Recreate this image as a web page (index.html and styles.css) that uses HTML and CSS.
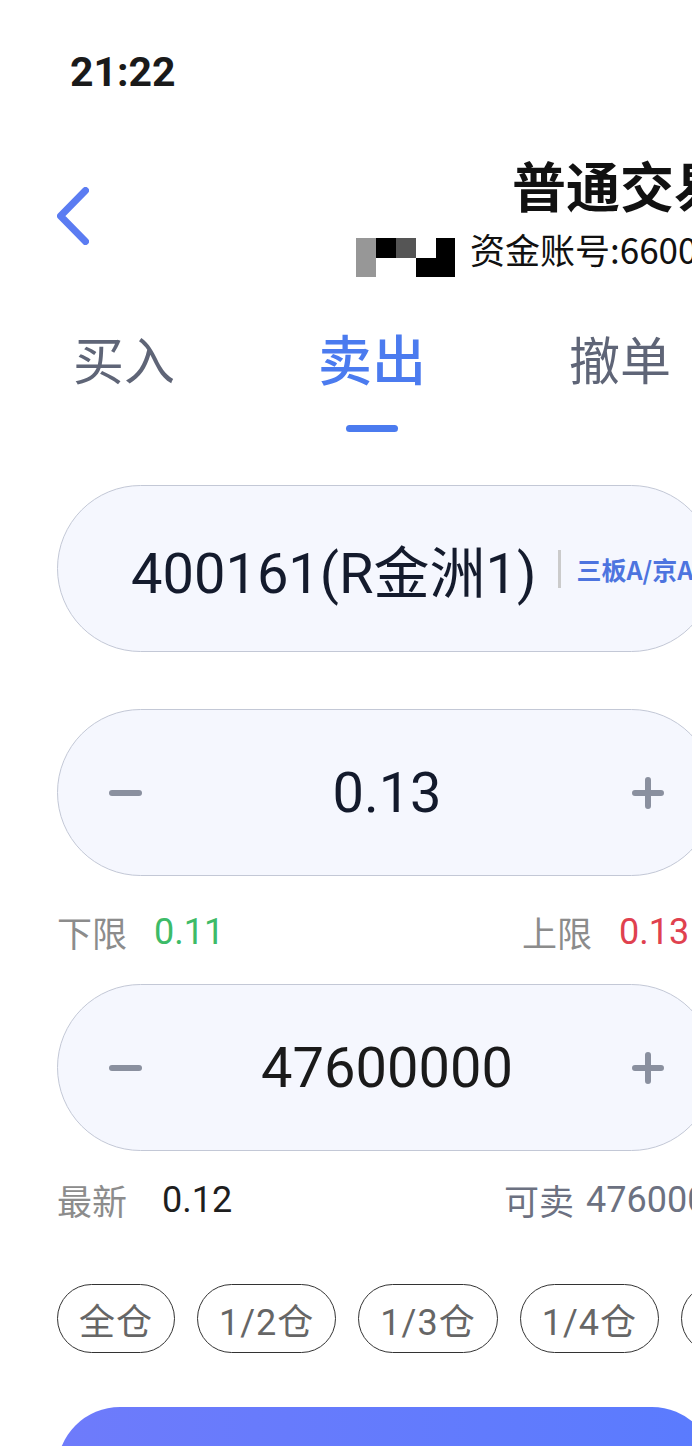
FILE: index.html
```html
<!DOCTYPE html>
<html lang="zh-CN">
  <head>
    <meta charset="UTF-8" />
    <meta name="viewport" content="width=device-width, initial-scale=1.0" />
    <title>普通交易 || 卖出</title>
    <link rel="stylesheet" href="styles.css">
  </head>
  <body>
    <div class="page">
      <div class="status">21:22</div>

      <header class="nav">
        <a class="back" href="#" aria-label="返回">
          <svg width="32" height="58" viewBox="0 0 32 58">
            <polyline points="28.5,3.5 3.5,29 28.5,54.5" fill="none" stroke="#5b7cf2" stroke-width="7" stroke-linecap="round" stroke-linejoin="round" />
          </svg>
        </a>
        <div class="title-block">
          <h1 class="title">普通交易</h1>
          <div class="account">
            <span class="mask">
              <i class="m-grey"></i><i class="m-black"></i><i class="m-dark"></i><i></i><i class="m-black"></i>
              <i class="m-grey"></i><i></i><i></i><i class="m-black"></i><i class="m-black"></i>
            </span>
            <span class="account-no">资金账号:66001829374</span>
          </div>
        </div>
      </header>

      <nav class="tabs">
        <div class="tab">买入</div>
        <div class="tab active">卖出</div>
        <div class="tab">撤单</div>
      </nav>

      <section class="form">
        <div class="field stock">
          <span class="stock-name">400161(R金洲1)</span>
          <span class="sep"></span>
          <span class="market">三板A/京A</span>
        </div>

        <div class="field stepper">
          <svg class="step" width="33" height="32" viewBox="0 0 33 32">
            <path d="M3 16h27" stroke="#8a909f" stroke-width="6" stroke-linecap="round" />
          </svg>
          <span class="value">0.13</span>
          <svg class="step" width="32" height="32" viewBox="0 0 32 32">
            <path d="M3 16h26M16 3v26" stroke="#8a909f" stroke-width="6" stroke-linecap="round" />
          </svg>
        </div>

        <div class="meta-row limits">
          <span class="side low"><span class="label">下限</span><span class="num green">0.11</span></span>
          <span class="side"><span class="label">上限</span><span class="num red">0.13</span></span>
        </div>

        <div class="field stepper">
          <svg class="step" width="33" height="32" viewBox="0 0 33 32">
            <path d="M3 16h27" stroke="#8a909f" stroke-width="6" stroke-linecap="round" />
          </svg>
          <span class="value qty">47600000</span>
          <svg class="step" width="32" height="32" viewBox="0 0 32 32">
            <path d="M3 16h26M16 3v26" stroke="#8a909f" stroke-width="6" stroke-linecap="round" />
          </svg>
        </div>

        <div class="meta-row latest">
          <span class="side last"><span class="label">最新</span><span class="num dark">0.12</span></span>
          <span class="side avail"><span class="label">可卖</span><span class="num">47600000</span></span>
        </div>

        <div class="chips">
          <button class="chip">全仓</button>
          <button class="chip">1/2仓</button>
          <button class="chip">1/3仓</button>
          <button class="chip">1/4仓</button>
          <button class="chip">1/5仓</button>
        </div>

        <button class="submit">卖出</button>
      </section>
    </div>
  </body>
</html>
```

FILE: styles.css
```css
html,
body {
  margin: 0;
  overflow: hidden;
  background-color: #ffffff;
}


.page {
  width: 900px;
  font-family: "Noto Sans CJK SC", sans-serif;
  color: #111111;
}


.status {
  height: 98px;
  padding: 52px 0 0 70px;
  font-family: "Roboto", sans-serif;
  font-weight: 700;
  font-size: 41px;
  line-height: 41px;
  color: #1a1a1a;
}


.nav {
  display: flex;
  align-items: flex-start;
  height: 140px;
  padding-left: 57px;
}


.back {
  display: block;
  width: 32px;
  height: 58px;
  margin-top: 37px;
}


.back svg {
  display: block;
}


.title-block {
  width: 528px;
  margin: 8px 0 0 267px;
}


.title {
  margin: 0;
  font-size: 54px;
  font-weight: 700;
  line-height: 54px;
  text-align: center;
  color: #111111;
}


.account {
  display: flex;
  align-items: flex-start;
  gap: 15px;
  margin-top: 17px;
  white-space: nowrap;
}


.mask {
  display: grid;
  grid-template-columns: repeat(5, 20px);
  grid-template-rows: repeat(2, 19.5px);
  width: 99px;
  margin-top: 9px;
  overflow: hidden;
}


.mask i {
  display: block;
}


.m-grey {
  background-color: #979797;
}


.m-black {
  background-color: #000000;
}


.m-dark {
  background-color: #555555;
}


.account-no {
  font-size: 35px;
  line-height: 40px;
  color: #111111;
}


.tabs {
  display: flex;
  margin-top: 38px;
}


.tab {
  flex: none;
  width: 248px;
  font-size: 51px;
  line-height: 60px;
  text-align: center;
  color: #5f6577;
}


.tab.active {
  font-size: 54px;
  font-weight: 500;
  color: #4b7bef;
}


.tab.active::after {
  content: "";
  display: block;
  width: 52px;
  height: 7px;
  margin: 37px auto 0;
  border-radius: 4px;
  background-color: #4b7bef;
}


.form {
  width: 658px;
  margin-top: 53px;
  padding-left: 57px;
}


.field {
  display: flex;
  align-items: center;
  box-sizing: border-box;
  height: 167px;
  border: 1.5px solid #c3c8d6;
  border-radius: 84px;
  background-color: #f5f7fe;
  white-space: nowrap;
}


.stock {
  padding-left: 73px;
  margin-bottom: 57px;
}


.stock-name {
  font-family: "Roboto", "Noto Sans CJK SC", sans-serif;
  font-size: 56px;
  color: #141b2d;
}


.sep {
  flex: none;
  width: 3px;
  height: 38px;
  margin: 0 15px 0 22px;
  background-color: #cbcbcb;
}


.market {
  font-size: 25px;
  font-weight: 700;
  color: #4d74df;
}


.stepper {
  padding: 0 50px 0 51px;
}


.step {
  flex: none;
  display: block;
}


.value {
  flex: 1;
  text-align: center;
  font-family: "Roboto", sans-serif;
  font-size: 56px;
  color: #131a2c;
}


.value.qty {
  color: #1a1a1a;
}


.meta-row {
  display: flex;
  align-items: center;
  height: 48px;
  white-space: nowrap;
}


.limits {
  margin: 32px 0 28px;
}


.latest {
  margin-top: 25px;
}


.side {
  flex: none;
  display: flex;
  align-items: center;
}


.side.low {
  width: 465px;
}


.side.last {
  width: 447px;
}


.label {
  font-size: 35px;
  line-height: 48px;
  color: #8c8c8c;
  margin-right: 27px;
}


.last .label {
  margin-right: 35px;
}


.num {
  font-family: "Roboto", sans-serif;
  font-size: 36px;
  line-height: 48px;
}


.green {
  color: #3dbb68;
}


.red {
  color: #e0414f;
}


.dark {
  color: #1e1e1e;
}


.avail .label,
.avail .num {
  color: #6c7181;
}


.avail .label {
  margin-right: 12px;
}


.chips {
  display: flex;
  gap: 22px;
  margin-top: 60px;
}


.chip {
  flex: none;
  box-sizing: border-box;
  height: 69px;
  padding: 0 21px;
  border: 1.5px solid #333333;
  border-radius: 35px;
  background-color: #ffffff;
  font-family: "Roboto", "Noto Sans CJK SC", sans-serif;
  font-size: 36px;
  letter-spacing: 1px;
  color: #666666;
}


.submit {
  display: block;
  width: 658px;
  height: 126px;
  margin-top: 54px;
  border: none;
  border-radius: 63px;
  background: linear-gradient(to right, #6e7bfb, #5a7bfe);
  font-family: "Noto Sans CJK SC", sans-serif;
  font-size: 48px;
  color: #ffffff;
}
```
